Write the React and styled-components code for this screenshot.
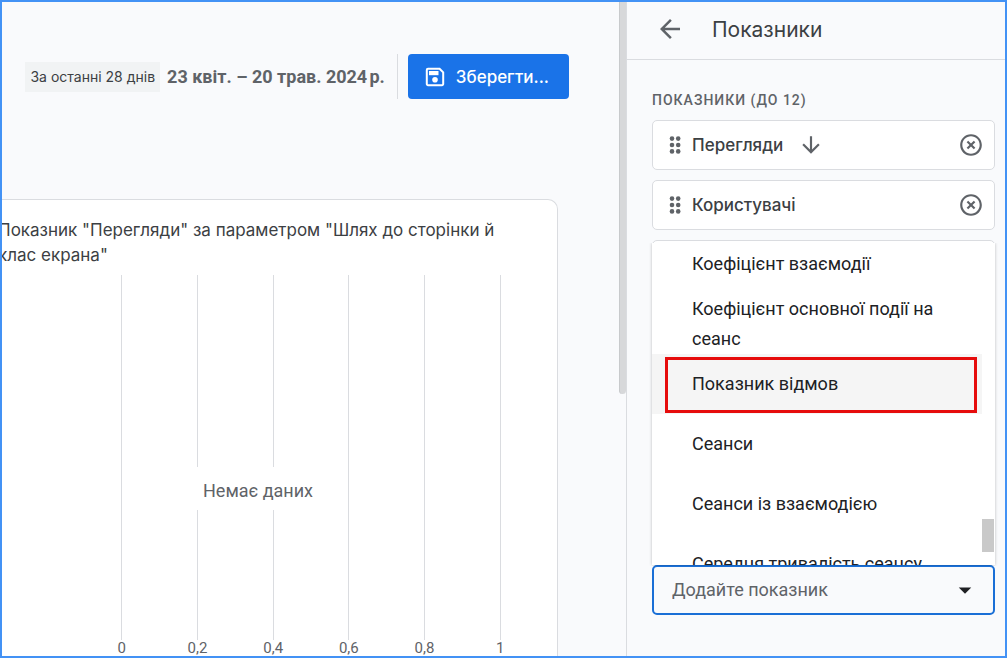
import React from 'react';
import styled, { createGlobalStyle } from 'styled-components';
import {
  MdArrowBack,
  MdArrowDownward,
  MdArrowDropDown,
  MdHighlightOff,
} from 'react-icons/md';

const GlobalStyle = createGlobalStyle`
  * {
    box-sizing: border-box;
  }
  body {
    margin: 0;
    font-family: Roboto, sans-serif;
    color: #202124;
  }
  button, select {
    font: inherit;
  }
`;

const StyledApp = styled.div`
  display: flex;
  height: 100vh;
  border: 2px solid #4392f5;
  background: #f9fafc;
  overflow: hidden;
`;

const StyledMain = styled.main`
  flex: 1;
  min-width: 0;
  display: flex;
  flex-direction: column;
  overflow: hidden;
`;

const StyledToolbar = styled.div`
  display: flex;
  align-items: center;
  justify-content: flex-end;
  padding: 52px 50px 100px 0;
  white-space: nowrap;
`;

const StyledPeriod = styled.span`
  padding: 0 5px;
  margin-right: 7px;
  background: #f1f3f4;
  color: #3c4043;
  font-family: Inter, sans-serif;
  font-size: 14px;
  line-height: 30px;
`;

const StyledDate = styled.span`
  padding-right: 12px;
  color: #5f6368;
  font-size: 18px;
  font-weight: 700;
`;

const StyledSaveButton = styled.button`
  display: flex;
  align-items: center;
  gap: 9px;
  height: 45px;
  padding: 0 20px 0 15px;
  border: 0;
  border-radius: 4px;
  background: #1a73e8;
  color: #fff;
  font-family: Inter, sans-serif;
  font-size: 17px;
  font-weight: 500;
`;

const StyledDivider = styled.span`
  height: 45px;
  margin-right: 10px;
  border-left: 1px solid #dadce0;
`;

const StyledCard = styled.section`
  flex: 1;
  display: flex;
  flex-direction: column;
  margin: 0 61px 0 -44px;
  padding: 18px 19px 0 39px;
  border: 1px solid #dadce0;
  border-bottom: 0;
  border-radius: 10px 10px 0 0;
  background: #fff;
`;

const StyledCardTitle = styled.h2`
  margin: 0 0 7px;
  color: #3c4043;
  font-family: Inter, sans-serif;
  font-size: 17px;
  font-weight: 400;
  line-height: 25px;
`;

const StyledChart = styled.div`
  position: relative;
  flex: 1;
  display: flex;
  padding-left: 86px;
`;

const StyledTick = styled.div`
  flex: 1;
  display: flex;
  flex-direction: column;
  align-items: center;
  color: #5f6368;
  font-size: 15px;
  line-height: 16px;

  &::before {
    content: '';
    flex: 1;
    border-left: 1px solid #dadce0;
  }
`;

const StyledNoData = styled.div`
  position: absolute;
  top: 192px;
  left: 193px;
  padding: 4px 12px 0;
  background: #fff;
  color: #5f6368;
  font-size: 18px;
  line-height: 39px;
`;

const StyledScrollTrack = styled.div`
  width: 7px;
`;

const StyledScrollThumb = styled.div`
  height: 60%;
  border-left: 1px solid #c8cacc;
  border-radius: 0 0 4px 4px;
  background: #d7d8da;
`;

const StyledPanel = styled.aside`
  width: 379px;
  border-left: 1px solid #dadce0;
`;

const StyledPanelHeader = styled.header`
  display: flex;
  align-items: center;
  gap: 27px;
  height: 58px;
  padding-left: 28px;
  padding-bottom: 3px;
  border-bottom: 1px solid #dadce0;
`;

const StyledPanelTitle = styled.h1`
  margin: 0;
  color: #3c4043;
  font-family: Inter, sans-serif;
  font-size: 21px;
  font-weight: 400;
`;

const StyledIconButton = styled.button`
  display: flex;
  padding: 0;
  border: 0;
  background: none;
  color: #5f6368;
`;

const StyledPanelBody = styled.div`
  padding: 30px 10px 0 25px;
`;

const StyledSectionLabel = styled.h3`
  margin: 0 0 10px;
  color: #5f6368;
  font-size: 14px;
  font-weight: 500;
  letter-spacing: 1px;
  line-height: 20px;
`;

const StyledMetrics = styled.ul`
  display: grid;
  gap: 10px;
  margin: 0;
  padding: 0;
  list-style: none;
`;

const StyledMetric = styled.li`
  display: flex;
  align-items: center;
  gap: 10px;
  height: 50px;
  padding: 0 10px 0 15px;
  border: 1px solid #dadce0;
  border-radius: 5px;
  background: #fff;
  color: #3c4043;
  font-family: Inter, sans-serif;
  font-size: 17px;
  font-weight: 500;

  ${StyledIconButton}:last-child {
    margin-left: auto;
  }
`;

const StyledMetricName = styled.span`
  padding-right: 5px;
`;

const StyledCombo = styled.div`
  position: relative;
  margin-top: 275px;
`;

const StyledSelect = styled.select`
  appearance: none;
  display: block;
  width: 100%;
  height: 50px;
  padding: 0 18px 2px;
  border: 2px solid #1a6fd6;
  border-radius: 5px;
  outline: none;
  background: #f9fafc;
  color: #5f6368;
  font-size: 18px;
`;

const StyledCaret = styled.span`
  position: absolute;
  top: 10px;
  right: 15px;
  display: flex;
  pointer-events: none;
`;

const StyledMenu = styled.div`
  position: absolute;
  right: 0;
  bottom: 100%;
  left: 0;
  display: flex;
  height: 322px;
  background: #fff;
  box-shadow: 0 0 3px rgba(0, 0, 0, 0.25);
  clip-path: inset(0 -3px -1px -3px);
  overflow: hidden;
`;

const StyledOptions = styled.ul`
  flex: 1;
  margin: -9px 0 0;
  padding: 0;
  list-style: none;
`;

const StyledOption = styled.li`
  position: relative;
  display: flex;
  align-items: center;
  height: 60px;
  padding: 0 40px;
  background: ${({ $active }) => ($active ? '#f5f5f5' : '#fff')};
  font-size: 18px;
  line-height: 30px;
`;

const StyledMarker = styled.span`
  position: absolute;
  top: 3px;
  right: 5px;
  bottom: 1px;
  left: 13px;
  border: 3px solid #e60c0c;
`;

const StyledMenuTrack = styled.div`
  display: flex;
  align-items: flex-end;
  width: 13px;
  padding: 0 1px 13px 0;
`;

const StyledMenuThumb = styled.div`
  width: 100%;
  height: 33px;
  background: #c9c9c9;
`;

const ticks = ['0', '0,2', '0,4', '0,6', '0,8', '1'];

const metrics = [
  { name: 'Перегляди', sorted: true },
  { name: 'Користувачі' },
  { name: '' },
];

const options = [
  'Коефіцієнт взаємодії',
  'Коефіцієнт основної події на сеанс',
  'Показник відмов',
  'Сеанси',
  'Сеанси із взаємодією',
  'Середня тривалість сеансу',
];

const activeOption = 'Показник відмов';

function DragHandle() {
  return (
    <svg width="14" height="18" viewBox="0 0 14 18" fill="#5f6368" aria-hidden="true">
      {[2.6, 9, 15.4].map(y => (
        <React.Fragment key={y}>
          <circle cx="4" cy={y} r="2.3" />
          <circle cx="10.2" cy={y} r="2.3" />
        </React.Fragment>
      ))}
    </svg>
  );
}

function SaveIcon() {
  return (
    <svg width="24" height="24" viewBox="0 0 24 24" fill="#fff" aria-hidden="true">
      <path
        d="M5 3.8h11.6l3.6 3.6V19a1.2 1.2 0 0 1-1.2 1.2H5A1.2 1.2 0 0 1 3.8 19V5A1.2 1.2 0 0 1 5 3.8z"
        fill="none"
        stroke="#fff"
        strokeWidth="2"
      />
      <path d="M6 6h9.5v4.2H6z" />
      <circle cx="12" cy="14.8" r="2.8" />
    </svg>
  );
}

function Report() {
  return (
    <StyledMain>
      <StyledToolbar>
        <StyledPeriod>За останні 28 днів</StyledPeriod>
        <StyledDate>23 квіт. – 20 трав. 2024{'\u202f'}р.</StyledDate>
        <StyledDivider />
        <StyledSaveButton type="button">
          <SaveIcon />
          Зберегти...
        </StyledSaveButton>
      </StyledToolbar>
      <StyledCard>
        <StyledCardTitle>
          Показник "Перегляди" за параметром "Шлях до сторінки й
          <br />
          клас екрана"
        </StyledCardTitle>
        <StyledChart>
          {ticks.map(tick => <StyledTick key={tick}>{tick}</StyledTick>)}
          <StyledNoData>Немає даних</StyledNoData>
        </StyledChart>
      </StyledCard>
    </StyledMain>
  );
}

function MetricPicker() {
  return (
    <StyledCombo>
      <StyledMenu>
        <StyledOptions role="listbox" aria-label="Показники">
          {options.map(option => (
            <StyledOption
              key={option}
              role="option"
              aria-selected={option === activeOption}
              $active={option === activeOption}
            >
              {option}
              {option === activeOption && <StyledMarker />}
            </StyledOption>
          ))}
        </StyledOptions>
        <StyledMenuTrack>
          <StyledMenuThumb />
        </StyledMenuTrack>
      </StyledMenu>
      <StyledSelect aria-label="Додайте показник" defaultValue="">
        <option value="">Додайте показник</option>
        {options.map(option => <option key={option}>{option}</option>)}
      </StyledSelect>
      <StyledCaret>
        <MdArrowDropDown size={30} />
      </StyledCaret>
    </StyledCombo>
  );
}

function MetricsPanel() {
  return (
    <StyledPanel>
      <StyledPanelHeader>
        <StyledIconButton type="button" aria-label="Назад">
          <MdArrowBack size={30} />
        </StyledIconButton>
        <StyledPanelTitle>Показники</StyledPanelTitle>
      </StyledPanelHeader>
      <StyledPanelBody>
        <StyledSectionLabel>ПОКАЗНИКИ (ДО 12)</StyledSectionLabel>
        <StyledMetrics>
          {metrics.map(({ name, sorted }) => (
            <StyledMetric key={name}>
              <DragHandle />
              <StyledMetricName>{name}</StyledMetricName>
              {sorted && <MdArrowDownward size={26} color="#5f6368" />}
              <StyledIconButton type="button" aria-label="Вилучити">
                <MdHighlightOff size={26} />
              </StyledIconButton>
            </StyledMetric>
          ))}
        </StyledMetrics>
        <MetricPicker />
      </StyledPanelBody>
    </StyledPanel>
  );
}

export default function App() {
  return (
    <React.Fragment>
      <GlobalStyle />
      <StyledApp>
        <Report />
        <StyledScrollTrack>
          <StyledScrollThumb />
        </StyledScrollTrack>
        <MetricsPanel />
      </StyledApp>
    </React.Fragment>
  );
}
